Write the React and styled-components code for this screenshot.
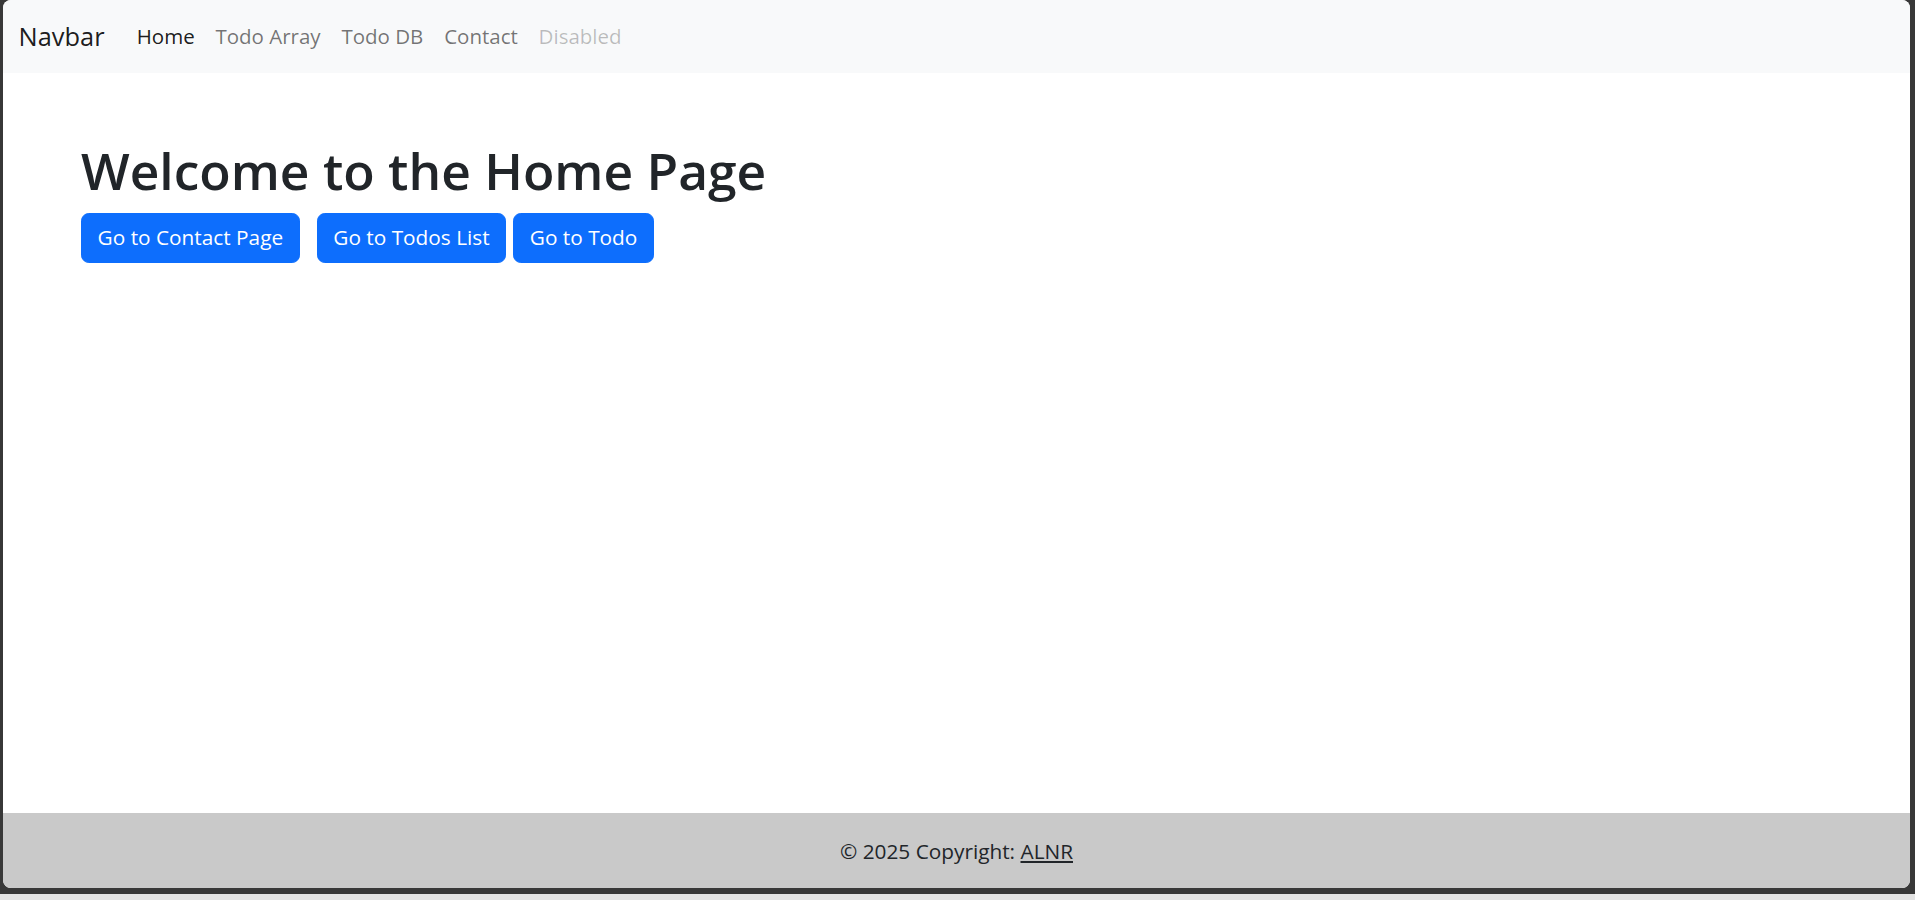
import React from "react";
import styled, { createGlobalStyle } from "styled-components";

const Global = createGlobalStyle`
  html, body { margin: 0; padding: 0; }
  body {
    background: #383838;
    font-family: "Open Sans", "Noto Sans", sans-serif;
    color: #212529;
  }
  * { box-sizing: border-box; }
`;

const Screen = styled.div`
  width: 1915px;
  height: 900px;
  display: flex;
  flex-direction: column;
  background: #383838;
`;

const Frame = styled.div`
  height: 894px;
  padding: 0 5px 6px 3px;
  display: flex;
`;

const BottomStrip = styled.div`
  height: 6px;
  background: #e3e3e3;
`;

const Window = styled.div`
  flex: 1;
  display: flex;
  flex-direction: column;
  background: #fff;
  border-radius: 8px;
  overflow: hidden;
`;

const Navbar = styled.nav`
  height: 73px;
  background: #f8f9fa;
  display: flex;
  align-items: center;
  padding: 0 15.6px;
`;

const Brand = styled.a`
  font-size: 25.4px;
  line-height: 39px;
  color: rgba(0, 0, 0, 0.9);
  text-decoration: none;
  margin-right: 21.8px;
`;

const NavList = styled.ul`
  display: flex;
  list-style: none;
  margin: 0;
  padding: 0;
`;

const NavLink = styled.a`
  display: block;
  padding: 10.4px;
  font-size: 20.5px;
  line-height: 31.2px;
  text-decoration: none;
  color: ${(p) =>
    p.$state === "active"
      ? "rgba(0,0,0,0.9)"
      : p.$state === "disabled"
      ? "rgba(0,0,0,0.25)"
      : "rgba(0,0,0,0.55)"};
`;

const Main = styled.main`
  flex: 1;
  padding: 66px 0 0 78px;
`;

const Heading = styled.h1`
  margin: 0 0 11.5px;
  font-size: 51.5px;
  line-height: 62.4px;
  font-weight: 600;
  color: #212529;
`;

const ButtonRow = styled.div`
  display: flex;
  align-items: center;
`;

const Button = styled.button`
  font-family: inherit;
  font-size: 20.8px;
  line-height: 31.2px;
  padding: 8.3px 15.6px;
  border: 1.3px solid #0d6efd;
  background: #0d6efd;
  color: #fff;
  border-radius: 7.8px;
  cursor: pointer;
  margin-right: ${(p) => p.$gap || 0}px;
`;

const Footer = styled.footer`
  height: 75px;
  background: #c9c9c9;
  display: flex;
  align-items: center;
  justify-content: center;
  font-size: 20.8px;
  color: #212529;
`;

const FooterLink = styled.a`
  color: #212529;
  text-decoration: underline;
`;

export default function App() {
  return (
    <Screen>
      <Global />
      <Frame>
        <Window>
          <Navbar>
            <Brand href="#">Navbar</Brand>
            <NavList>
              <li><NavLink href="#" $state="active">Home</NavLink></li>
              <li><NavLink href="#">Todo Array</NavLink></li>
              <li><NavLink href="#">Todo DB</NavLink></li>
              <li><NavLink href="#">Contact</NavLink></li>
              <li><NavLink $state="disabled">Disabled</NavLink></li>
            </NavList>
          </Navbar>
          <Main>
            <Heading>Welcome to the Home Page</Heading>
            <ButtonRow>
              <Button $gap={17}>Go to Contact Page</Button>
              <Button $gap={7}>Go to Todos List</Button>
              <Button>Go to Todo</Button>
            </ButtonRow>
          </Main>
          <Footer>
            <span>
              © 2025 Copyright: <FooterLink href="#">ALNR</FooterLink>
            </span>
          </Footer>
        </Window>
      </Frame>
      <BottomStrip />
    </Screen>
  );
}
